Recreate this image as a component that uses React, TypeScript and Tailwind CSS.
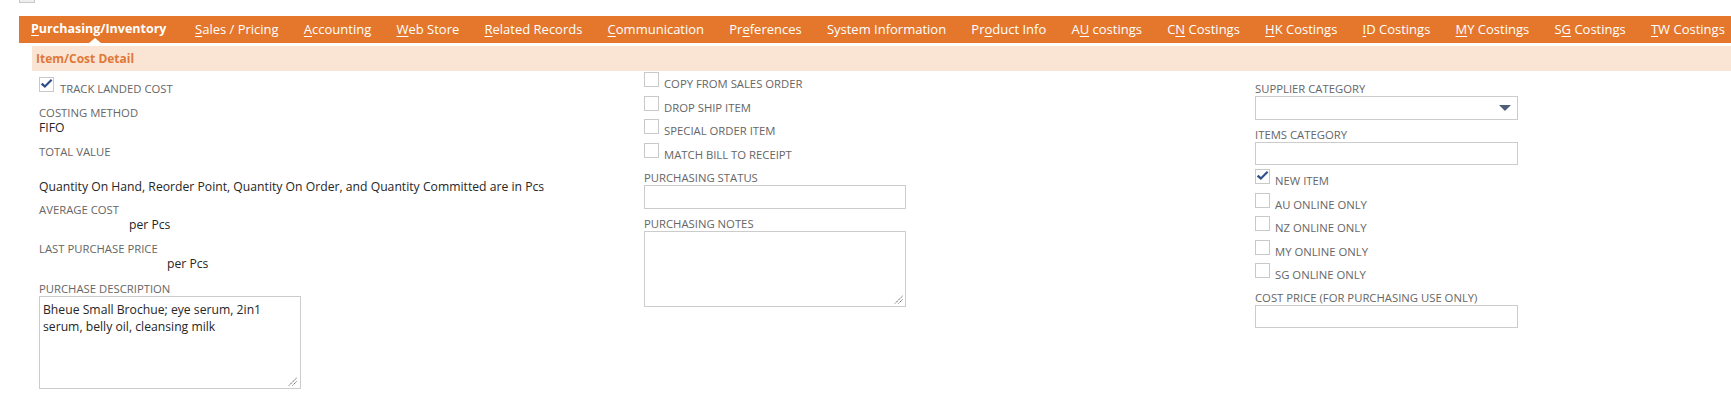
import React from 'react';

type Tab = { pre: string; key: string; post: string; active?: boolean };

const TABS: Tab[] = [
  { pre: '', key: 'P', post: 'urchasing/Inventory', active: true },
  { pre: '', key: 'S', post: 'ales / Pricing' },
  { pre: '', key: 'A', post: 'ccounting' },
  { pre: '', key: 'W', post: 'eb Store' },
  { pre: '', key: 'R', post: 'elated Records' },
  { pre: '', key: 'C', post: 'ommunication' },
  { pre: 'Pr', key: 'e', post: 'ferences' },
  { pre: 'System Information', key: '', post: '' },
  { pre: 'Pr', key: 'o', post: 'duct Info' },
  { pre: 'A', key: 'U', post: ' costings' },
  { pre: 'C', key: 'N', post: ' Costings' },
  { pre: '', key: 'H', post: 'K Costings' },
  { pre: '', key: 'I', post: 'D Costings' },
  { pre: '', key: 'M', post: 'Y Costings' },
  { pre: 'S', key: 'G', post: ' Costings' },
  { pre: '', key: 'T', post: 'W Costings' },
];

function Box({ checked }: { checked?: boolean }) {
  return (
    <span className="flex h-[15px] w-[15px] shrink-0 items-center justify-center border border-[#c9c9c9] bg-white">
      {checked && (
        <svg width="13" height="12" viewBox="0 0 13 12" className="-mt-[2px]">
          <path d="M0.8 6.4 L2.6 4.7 L4.9 7 L10.9 0.9 L12.4 2.4 L4.9 10 Z" fill="#2f4f8a" />
        </svg>
      )}
    </span>
  );
}

function Check({ label, checked }: { label: string; checked?: boolean }) {
  return (
    <div className="flex h-[23.5px] items-start">
      <Box checked={checked} />
      <span className="ml-[5px] pt-[5px] text-[11.3px] leading-[14px] text-[#666]">{label}</span>
    </div>
  );
}

function Label({ children, className = '' }: { children: React.ReactNode; className?: string }) {
  return <div className={`text-[11.3px] leading-[14px] text-[#666] ${className}`}>{children}</div>;
}

function Grip() {
  return (
    <svg width="9" height="9" viewBox="0 0 9 9" className="mt-auto mb-[1px] self-end">
      <path d="M8.5 1 L1 8.5 M8.5 4.5 L4.5 8.5" stroke="#555" strokeWidth="1" strokeDasharray="1.5 0.8" />
    </svg>
  );
}

export default function App() {
  return (
    <div className="h-[407px] w-[1731px] overflow-hidden bg-white font-['Open_Sans',sans-serif]">
      {/* bottom edge of the section above, scrolled out of view */}
      <div className="flex h-[3px] flex-col justify-end overflow-hidden pl-[19px]">
        <div className="flex shrink-0 items-end">
          <span className="h-[16px] w-[16px] border border-[#c9c9c9] bg-[#eee]" />
          <span className="ml-[5px] text-[11.3px] leading-[16px] text-[#666]">LAND TRACED ITEM</span>
        </div>
      </div>

      <div className="mt-[13px] ml-[19px] flex h-[27px] items-center bg-[#e4772b] text-[13px] text-white whitespace-nowrap">
        {TABS.map((t) => (
          <div
            key={t.pre + t.key + t.post}
            className={`relative flex h-full items-center ${
              t.active ? 'pr-[16px] pl-[12px] text-[12.5px] font-bold' : 'px-[12.6px]'
            }`}
          >
            <span>
              {t.pre}
              {t.key && <span className="underline underline-offset-2">{t.key}</span>}
              {t.post}
            </span>
            {t.active && (
              <span className="absolute bottom-0 left-[70px] h-0 w-0 border-r-[6px] border-b-[5px] border-l-[6px] border-r-transparent border-b-white border-l-transparent" />
            )}
          </div>
        ))}
      </div>

      <div className="mt-[3px] ml-[32px] flex h-[25px] items-center bg-[#fae5d5] pl-[4px]">
        <span className="text-[12px] font-bold text-[#e0783a]">Item/Cost Detail</span>
      </div>

      <div className="grid grid-cols-[605px_611px_1fr] pl-[39px] text-[#262626]">
        {/* left column */}
        <div className="flex flex-col pt-[6px]">
          <div className="flex items-start">
            <Box checked />
            <span className="ml-[6px] pt-[5px] text-[11.3px] leading-[14px] text-[#666]">TRACK LANDED COST</span>
          </div>
          <Label className="mt-[10px]">COSTING METHOD</Label>
          <div className="text-[12.2px] leading-[16px]">FIFO</div>
          <Label className="mt-[9px]">TOTAL VALUE</Label>
          <div className="h-[16px]" />
          <div className="mt-[4px] text-[12.2px] leading-[16px]">
            Quantity On Hand, Reorder Point, Quantity On Order, and Quantity Committed are in Pcs
          </div>
          <Label className="mt-[8px]">AVERAGE COST</Label>
          <div className="pl-[90px] text-[12.2px] leading-[16px]">per Pcs</div>
          <Label className="mt-[9px]">LAST PURCHASE PRICE</Label>
          <div className="pl-[128px] text-[12.2px] leading-[16px]">per Pcs</div>
          <Label className="mt-[10px]">PURCHASE DESCRIPTION</Label>
          <div className="flex h-[93px] w-[262px] flex-col border border-[#cccccc] px-[3px] pt-[4px] pb-[1px] text-[12.2px] leading-[17px]">
            <div>Bheue Small Brochue; eye serum, 2in1</div>
            <div>serum, belly oil, cleansing milk</div>
            <Grip />
          </div>
        </div>

        {/* middle column */}
        <div className="flex flex-col pt-[1px]">
          <Check label="COPY FROM SALES ORDER" />
          <Check label="DROP SHIP ITEM" />
          <Check label="SPECIAL ORDER ITEM" />
          <Check label="MATCH BILL TO RECEIPT" />
          <Label className="mt-[5px]">PURCHASING STATUS</Label>
          <div className="h-[24px] w-[262px] border border-[#cccccc]" />
          <Label className="mt-[8px]">PURCHASING NOTES</Label>
          <div className="flex h-[76px] w-[262px] flex-col border border-[#cccccc] pr-[2px] pb-[1px]">
            <Grip />
          </div>
        </div>

        {/* right column */}
        <div className="flex flex-col pt-[11px]">
          <Label>SUPPLIER CATEGORY</Label>
          <div className="flex h-[24px] w-[263px] items-center justify-end border border-[#cccccc] pr-[6px]">
            <svg width="12" height="6" viewBox="0 0 12 6">
              <path d="M0 0 H12 L6 6 Z" fill="#4e5f7c" />
            </svg>
          </div>
          <Label className="mt-[8px]">ITEMS CATEGORY</Label>
          <div className="h-[23px] w-[263px] border border-[#cccccc]" />
          <div className="mt-[4px]">
            <Check label="NEW ITEM" checked />
            <Check label="AU ONLINE ONLY" />
            <Check label="NZ ONLINE ONLY" />
            <Check label="MY ONLINE ONLY" />
            <Check label="SG ONLINE ONLY" />
          </div>
          <Label className="mt-[4px]">COST PRICE (FOR PURCHASING USE ONLY)</Label>
          <div className="h-[23px] w-[263px] border border-[#cccccc]" />
        </div>
      </div>
    </div>
  );
}
